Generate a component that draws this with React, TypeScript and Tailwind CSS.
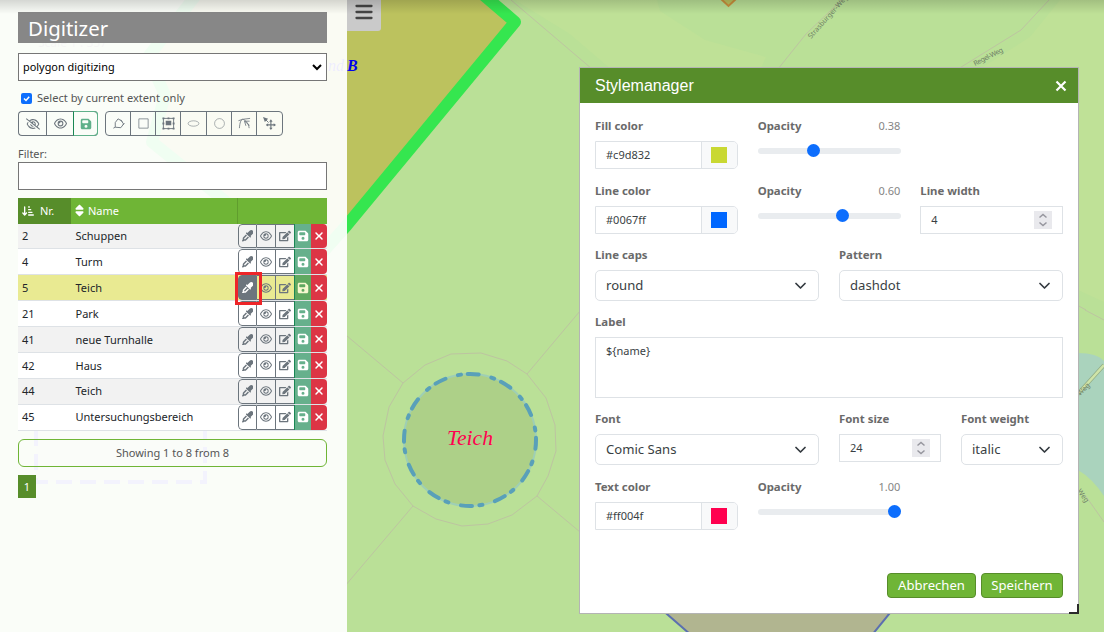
import type { ReactNode } from "react";
import { FaArrowDownShortWide, FaEyeDropper, FaFloppyDisk, FaRegEye, FaRegEyeSlash, FaSort, FaXmark } from "react-icons/fa6";
import { FaEdit } from "react-icons/fa";

const rows = [
  { nr: 2, name: "Schuppen" },
  { nr: 4, name: "Turm" },
  { nr: 5, name: "Teich", active: true },
  { nr: 21, name: "Park" },
  { nr: 41, name: "neue Turnhalle" },
  { nr: 42, name: "Haus" },
  { nr: 44, name: "Teich" },
  { nr: 45, name: "Untersuchungsbereich" },
];

function MapCanvas() {
  return (
    <svg className="absolute inset-0" width="1104" height="632" viewBox="0 0 1104 632" fill="none">
      <rect width="1104" height="632" fill="#bae097" />
      <path d="M515 0 L657 0 L660 11 L705 40 L766 57 L760 70 L612 70 L570 34 Z" fill="#bfe197" />
      <path d="M1104 0 L1060 0 L1030 37 L980 69 L1078 69 L1078 290 L1104 302 Z" fill="#bfe197" />
      <path d="M1078 353 Q1097 353 1104 361 V496 Q1092 478 1078 470 Z" fill="#aad3bd" />
      <path d="M1104 365 L1076 396" stroke="#8faa83" strokeWidth="4" />
      <path d="M1104 365 L1076 396" stroke="#cfe4a8" strokeWidth="2.6" />
      <g stroke="#bdc4a1" strokeWidth="1">
        <path d="M511 0 L592 69" />
        <path d="M778 69 L806 34 L850 -8" />
        <path d="M958 69 L1021 30 L1049 0" />
        <path d="M1068 300 L1086 310" />
        <path d="M1085 495 L1104 522" />
        <path d="M1085 310 L1104 320" />
        <path d="M347 336 L403 383 M527 374 L580 311 M537 496 L580 532 M413 506 L345 586" />
        <path d="M403 383 L389 407 L383 436 L385 460 L395 484 L413 506 L436 519 L462 526 L488 524 L512 515 L537 496 L548 476 L556 451 L555 425 L546 398 L527 374 L507 361 L481 353 L451 354 L425 365 L403 383" />
      </g>
      <path d="M515 22 L347 225 L307 270 L240 213 L152 142 L165 95 L148 57 L200 -10 L480 -8 Z" fill="#bcc25e" stroke="#35e64f" strokeWidth="12" strokeLinejoin="round" />
      <path d="M36 400 H205 V482 H36 Z" fill="#a7c9b4" fillOpacity=".4" stroke="#5858d8" strokeWidth="4" strokeDasharray="16 8" />
      <circle cx="470" cy="440" r="66" fill="#add088" stroke="#9fcfb4" strokeWidth="2" />
      <circle cx="470" cy="440" r="66" stroke="#59a0b9" strokeWidth="4" strokeLinecap="round" strokeDasharray="11 13 3 7.56" transform="rotate(-92 470 440)" />
      <text x="447" y="445" textLength="46" lengthAdjust="spacingAndGlyphs" fill="#ff004f" fontSize="22" fontStyle="italic" fontFamily="'Z003','URW Chancery L','Liberation Serif',serif">Teich</text>
      <text x="328" y="71" fill="#0000ee" fontSize="16" fontStyle="italic" fontFamily="'Z003','Liberation Serif',serif">nd</text>
      <text x="347" y="71" fill="#0000ee" fontSize="16" fontWeight="700" fontStyle="italic" fontFamily="'Z003','Liberation Serif',serif">B</text>
      <text x="38" y="47" fill="#777" fontSize="12" fontFamily="'Noto Sans',sans-serif">Scale 1 : 357</text>
      <path d="M720 -2 L728.500 6 L737 -2" fill="#bcc25e" stroke="#c98f3c" strokeWidth="2" />
      <path d="M660 608 L691 635 H872 L894 608 Z" fill="#b1b590" stroke="#5b6fb0" strokeWidth="2" />
      <g fill="#6f7f66" fontSize="7" fontFamily="'Noto Sans',sans-serif">
        <text transform="translate(811 39) rotate(-48)">Strasburger-Weg</text>
        <text transform="translate(975 66) rotate(-27)" textLength="32">Regel-Weg</text>
        <text transform="translate(1080 396) rotate(-45)">Weg</text>
        <text transform="translate(1077 491) rotate(55)">Weg</text>
      </g>
    </svg>
  );
}

const toolIcons: { w: string; icon: ReactNode }[] = [
  { w: "w-[25px]", icon: <path d="M3.500 11 V6 L6.500 2 L10 4 L12.500 7.500 L9.500 11.500 Z M1.500 12 L3.500 11 M9.500 3 l1.500 2 M11.500 8.500 l2 -1.500" /> },
  { w: "w-[25px]", icon: <path d="M2 2 H12 V12 H2 Z" strokeWidth=".8" /> },
  {
    w: "w-[25px]",
    icon: (
      <>
        <path d="M1.500 1.500 H12.500 V12.500 H1.500 Z" strokeWidth="1" />
        <path d="M4 4 H10 V9 H4 Z M.5 .5h2v2h-2z M6 .5h2v2H6z M11.500 .5h2v2h-2z M.5 6h2v2h-2z M11.500 6h2v2h-2z M.5 11.500h2v2h-2z M6 11.500h2v2H6z M11.500 11.500h2v2h-2z" fill="#6c757d" stroke="none" />
      </>
    ),
  },
  { w: "w-[26px]", icon: <ellipse cx="7" cy="7" rx="5.800" ry="2.900" strokeWidth=".6" /> },
  { w: "w-[25px]", icon: <circle cx="7" cy="7" r="5.300" strokeWidth=".6" /> },
  { w: "w-[25px]", icon: <path d="M1.500 12 C2 6 3 3 5 2.500 M.5 4 L5 2.500 L13 1.500 M5 2.500 C8 3 11.500 7 12 12 M7 4.500 L12.500 4.500 M7 4.500 L8.500 9.500 M7 4.500 L12.500 9" strokeWidth=".9" /> },
  { w: "w-[25px]", icon: <><path d="M8.500 4 V13 M4 8.500 H13" strokeWidth="1.200" /><path d="M0 0 L5.500 2 L2 5.500Z M8.500 2.500l1.800 2.500H6.700z M8.500 14l1.800-2.500H6.700z M14 8.500l-2.500-1.800v3.600z M3 8.500l2.500-1.800v3.600z" fill="#6c757d" stroke="none" /><path d="M3 3 L6 6" /></> },
];

function Sidebar() {
  return (
    <aside className="relative h-[632px] w-[347px] shrink-0 bg-white/[.93] pt-3 pr-5 pl-[18px] text-[11px] text-[#555]">
      <h1 className="flex h-[31px] items-center bg-[#878787] pt-[2px] pl-[10px] text-[20.400px] leading-none text-white">Digitizer</h1>
      <div className="mt-[10px] flex h-7 items-center justify-between border border-[#767676] bg-white pr-1 pl-1 text-[10.900px] text-black">
        polygon digitizing
        <svg width="10" height="7" viewBox="0 0 10 7" fill="none" stroke="#000" strokeWidth="2"><path d="M1 1 L5 5 L9 1" /></svg>
      </div>
      <div className="mt-[9px] flex h-4 items-center gap-[5px] pl-[3px] text-[11.100px]">
        <span className="flex size-[11px] items-center justify-center rounded-[2px] bg-[#0d6efd]">
          <svg width="9" height="9" viewBox="0 0 9 9" fill="none" stroke="#fff" strokeWidth="1.500"><path d="M2 4.500 L4 6.500 L7.200 2.800" /></svg>
        </span>
        Select by current extent only
      </div>
      <div className="mt-[5px] flex h-[25px] gap-[7px] text-[#6c757d]">
        <div className="flex rounded-[4px] border border-[#6c757d] border-r-[#5fb08a]">
          <span className="flex w-[27px] items-center justify-center"><FaRegEyeSlash size={14} /></span>
          <span className="flex w-[27px] items-center justify-center border-l border-[#6c757d]"><FaRegEye size={13} /></span>
          <span className="-my-px -mr-px flex w-[25px] items-center justify-center rounded-r-[4px] border border-[#5fb08a] border-l-[#198754] text-[#5fb08a]"><FaFloppyDisk size={12} /></span>
        </div>
        <div className="flex divide-x divide-[#6c757d] rounded-[4px] border border-[#6c757d]">
          {toolIcons.map((t, i) => (
            <span key={i} className={`flex items-center justify-center ${t.w}`}>
              <svg width="13" height="13" viewBox="0 0 14 14" fill="none" stroke="#6c757d">{t.icon}</svg>
            </span>
          ))}
        </div>
      </div>
      <div className="mt-[10px] h-4 leading-4">Filter:</div>
      <div className="h-7 border border-[#767676] bg-white" />
      <div className="mt-2 flex h-[25.500px] items-center bg-[#6fb536] text-white">
        <div className="flex h-full w-[53px] items-center gap-[6px] bg-[#578d2a] pl-1"><FaArrowDownShortWide size={12} />Nr.</div>
        <div className="flex h-full w-[167px] items-center gap-[2px] border-r border-[#578d2a]/60 pl-[2px]"><FaSort size={13} />Name</div>
      </div>
      <div className="flex h-[207px] flex-col text-[#212529]">
        {rows.map((r, i) => (
          <div key={r.nr} className={`flex flex-1 items-center border-b border-[#dee2e6] ${r.active ? "bg-[#e9ea92]" : i % 2 ? "bg-white" : "bg-[#f2f2f2]"}`}>
            <span className="w-[57.500px] pt-px pl-1">{r.nr}</span>
            <span className="w-[162.500px] pt-px">{r.name}</span>
            <div className="flex h-full w-[89px] overflow-hidden rounded-[4px] text-[#6c757d]">
              <span className={`flex w-[19px] items-center justify-center rounded-l-[4px] border border-[#6c757d] ${r.active ? "bg-[#6c757d] text-white" : ""}`}>
                <FaEyeDropper size={11.5} />
              </span>
              <span className="flex w-[18px] items-center justify-center border-y border-[#6c757d]"><FaRegEye size={12} /></span>
              <span className="flex w-[19px] items-center justify-center border border-r-0 border-[#6c757d]"><FaEdit size={12} /></span>
              <span className={`flex w-[17px] items-center justify-center border-l border-[#198754] ${r.active ? "bg-[#60a960] text-[#f8f8cf]" : "bg-[#66b08c] text-white"}`}><FaFloppyDisk size={12} /></span>
              <span className="flex w-4 items-center justify-center bg-[#dc3545] text-white"><FaXmark size={12} /></span>
            </div>
          </div>
        ))}
      </div>
      <div className="absolute top-[272px] left-[235px] h-[33px] w-[27px] border-[3px] border-[#ee2528]" />
      <div className="mt-[8.500px] flex h-7 items-center justify-center rounded-md border border-[#6fb536]">Showing 1 to 8 from 8</div>
      <div className="mt-2 flex h-[23px] w-[18px] items-center justify-center bg-[#578d2a] pt-px text-white">1</div>
    </aside>
  );
}

function Field({ label, value, className, children }: { label: string; value?: string; className: string; children: ReactNode }) {
  return (
    <div className={`flex flex-col ${className}`}>
      <div className="mb-[5px] flex h-5 shrink-0 items-center justify-between">
        <span className="text-[11.400px] leading-4 font-bold text-[#6a6a6a]">{label}</span>
        {value && <span className="leading-4 text-[#858585]">{value}</span>}
      </div>
      {children}
    </div>
  );
}

function ColorInput({ hex, swatch }: { hex: string; swatch: string }) {
  return (
    <div className="flex h-7 w-[143px] rounded-r-[5px] border border-[#dee2e6] bg-white">
      <span className="flex grow items-center pl-[10px]">{hex}</span>
      <span className="flex w-9 items-center justify-center rounded-r-[4px] border-l border-[#dee2e6] bg-[#f8f9fa] pr-[2px]"><i className={`size-4 ${swatch}`} /></span>
    </div>
  );
}

function Slider({ knob }: { knob: string }) {
  return (
    <div className="relative mt-[7px] h-[6px] w-[143px] rounded-full bg-[#e9ecef]">
      <span className={`absolute -top-[4px] size-[13px] rounded-full bg-[#0d6efd] ${knob}`} />
    </div>
  );
}

function SelectBox({ text }: { text: string }) {
  return (
    <div className="flex h-[31px] items-center justify-between rounded-[5px] border border-[#dee2e6] pr-3 pl-[10px] text-[13.100px]">
      {text}
      <svg width="11" height="8" viewBox="0 0 11 8" fill="none" stroke="#343a40" strokeWidth="1.700" strokeLinecap="round" strokeLinejoin="round"><path d="M1 1.500 L5.500 6 L10 1.500" /></svg>
    </div>
  );
}

function NumberBox({ text }: { text: string }) {
  return (
    <div className="flex h-7 items-center justify-between border border-[#dee2e6] pr-[10px] pl-[10px]">
      {text}
      <svg width="18" height="18" viewBox="0 0 18 18" fill="none" stroke="#96969e" strokeWidth="1.500"><rect width="18" height="18" fill="#e9e9ed" stroke="none" /><path d="M5.500 6.500 L9 3.500 L12.500 6.500 M5.500 11.500 L9 14.500 L12.500 11.500" /></svg>
    </div>
  );
}

function StyleManager() {
  return (
    <section className="relative mt-[67px] ml-[232px] flex h-[547px] w-[500px] shrink-0 flex-col border border-[#b4b4b4] bg-white text-[11px] text-[#3a3f44]">
      <header className="flex h-[35px] items-center justify-between bg-[#578d2a] pr-[11px] pl-[15px] font-['Liberation_Sans',sans-serif] text-[16px] text-white">
        Stylemanager
        <svg width="12" height="12" viewBox="0 0 12 12" stroke="#fff" strokeWidth="2.200"><path d="M1.500 1.500 L10.500 10.500 M10.500 1.500 L1.500 10.500" /></svg>
      </header>
      <div className="mt-[13px] ml-[15px] grid w-[468px] grid-cols-12 grid-rows-[65px_64px_67px_97px_68px_60px] gap-x-5">
        <Field label="Fill color" className="col-span-4"><ColorInput hex="#c9d832" swatch="bg-[#c9d832]" /></Field>
        <Field label="Opacity" value="0.38" className="col-span-4"><Slider knob="left-[49px]" /></Field>
        <div className="col-span-4" />
        <Field label="Line color" className="col-span-4"><ColorInput hex="#0067ff" swatch="bg-[#0067ff]" /></Field>
        <Field label="Opacity" value="0.60" className="col-span-4"><Slider knob="left-[78px]" /></Field>
        <Field label="Line width" className="col-span-4"><NumberBox text="4" /></Field>
        <Field label="Line caps" className="col-span-6"><SelectBox text="round" /></Field>
        <Field label="Pattern" className="col-span-6"><SelectBox text="dashdot" /></Field>
        <Field label="Label" className="col-span-12"><div className="h-[61px] border border-[#dee2e6] px-[10px] pt-[5px]">{"${name}"}</div></Field>
        <Field label="Font" className="col-span-6"><SelectBox text="Comic Sans" /></Field>
        <Field label="Font size" className="col-span-3"><NumberBox text="24" /></Field>
        <Field label="Font weight" className="col-span-3"><SelectBox text="italic" /></Field>
        <Field label="Text color" className="col-span-4"><ColorInput hex="#ff004f" swatch="bg-[#ff004f]" /></Field>
        <Field label="Opacity" value="1.00" className="col-span-4"><Slider knob="right-0" /></Field>
      </div>
      <footer className="mt-auto mr-[15px] mb-[15px] flex justify-end gap-[5px] text-[13.100px] text-white">
        <button className="h-[25px] w-[89px] rounded-[4px] border border-[#578d2a] bg-[#6fb536]">Abbrechen</button>
        <button className="h-[25px] w-[82px] rounded-[4px] border border-[#578d2a] bg-[#6fb536]">Speichern</button>
      </footer>
      <span className="absolute -right-px -bottom-px size-[10px] border-r-2 border-b-2 border-[#2b2b2b]" />
    </section>
  );
}

export default function App() {
  return (
    <main className="relative flex h-[632px] w-[1104px] items-start overflow-hidden font-['Noto_Sans',sans-serif]">
      <MapCanvas />
      <Sidebar />
      <div className="absolute top-0 left-[347px] flex h-[31px] w-[34px] items-center justify-center rounded-br-[3px] bg-[#cacaca] pb-[7px]">
        <svg width="18" height="16" viewBox="0 0 18 16" stroke="#444" strokeWidth="2.300" strokeLinecap="round"><path d="M1.500 2 H16.500 M1.500 8 H16.500 M1.500 14 H16.500" /></svg>
      </div>
      <StyleManager />
      <div className="absolute inset-x-0 top-0 h-[14px] bg-linear-to-b from-black/15 to-transparent" />
    </main>
  );
}
